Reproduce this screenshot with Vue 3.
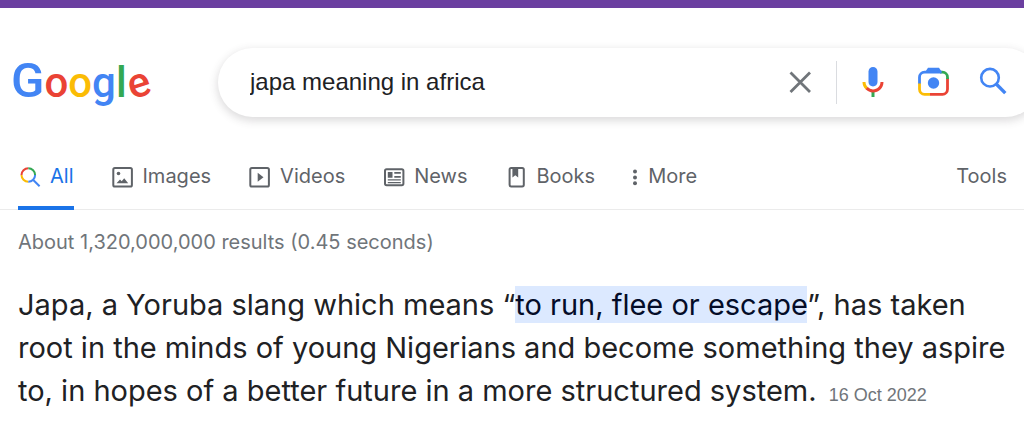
<script setup>
import { ref } from 'vue'

const query = ref('japa meaning in africa')
const logo = [
  { ch: 'G', tone: 'blue cap' },
  { ch: 'o', tone: 'red' },
  { ch: 'o', tone: 'yellow' },
  { ch: 'g', tone: 'blue' },
  { ch: 'l', tone: 'green' },
  { ch: 'e', tone: 'red tilt' },
]
const tabs = ['All', 'Images', 'Videos', 'News', 'Books', 'More']
</script>

<template>
  <div class="page">
    <div class="strip"></div>

    <header class="header">
      <a class="logo" href="#" aria-label="Google"><span v-for="(l, i) in logo" :key="i" :class="l.tone">{{ l.ch }}</span></a>
      <form class="search" role="search" @submit.prevent>
        <input v-model="query" class="query" type="text" aria-label="Search" />
        <button class="icon" type="button" aria-label="Clear" @click="query = ''">
          <svg viewBox="0 0 36 36"><path d="M8.500 8.500 28 28M28 8.500 8.500 28" stroke="#70757a" stroke-width="2.800" fill="none" /></svg>
        </button>
        <span class="divider"></span>
        <div class="tools">
          <button class="icon" type="button" aria-label="Search by voice">
            <svg viewBox="0 0 24 24">
              <path fill="#4285f4" d="M12 15c1.66 0 3-1.31 3-2.97V5.01C15 3.35 13.66 2 12 2S9 3.34 9 5.01v7.02C9 13.69 10.34 15 12 15z" />
              <path fill="#34a853" d="M11 18.08h2V22h-2z" />
              <path fill="#fbbc05" d="M7.05 16.87C5.78 15.54 5 14.04 5 12h2c0 1.45.56 2.42 1.47 3.38v.32l-1.15 1.18z" />
              <path fill="#ea4335" d="M12 16.93a4.97 5.25 0 0 1-3.54-1.55l-1.41 1.49C8.31 18.21 10.07 19 12 19c3.87 0 6.99-2.92 6.99-7H17c0 2.92-2.24 4.93-5 4.93z" />
            </svg>
          </button>
          <button class="icon" type="button" aria-label="Search by image">
            <svg viewBox="0 0 36 36" fill="none" stroke-width="2.800">
              <path stroke="#ea4335" d="M32.500 14v11.300a5 5 0 0 1-5 5H15" />
              <path stroke="#fbbc05" d="M15 30.300H9.500a5 5 0 0 1-5-5V19" />
              <path stroke="#34a853" d="M25 8.200h2.500a5 5 0 0 1 5 5V15" />
              <path stroke="#4285f4" d="M4.500 19.500v-6.300a5 5 0 0 1 5-5h17" />
              <path fill="#4285f4" d="M13 3.800h11l3 4.400H10z" />
              <circle cx="18.500" cy="19" r="5.700" fill="#4285f4" />
            </svg>
          </button>
          <button class="icon" type="submit" aria-label="Google Search">
            <svg viewBox="0 0 36 36" fill="none" stroke="#4285f4">
              <circle cx="15" cy="13.700" r="8.800" stroke-width="2.600" />
              <path d="M21 19.800 30.300 29.100" stroke-width="3.400" />
            </svg>
          </button>
        </div>
      </form>
    </header>

    <nav class="tabs">
      <a v-for="tab in tabs" :key="tab" class="tab" :class="{ active: tab === 'All' }" href="#">
        <svg v-if="tab === 'All'" class="glyph" viewBox="0 0 24 24" fill="none" stroke-width="2">
          <path stroke="#ea4335" d="M3.500 11a6.800 6.800 0 0 1 6.800-6.800" />
          <path stroke="#34a853" d="M10.300 4.200a6.800 6.800 0 0 1 6.800 6.800" />
          <path stroke="#fbbc05" d="M10.300 17.800A6.800 6.800 0 0 1 3.500 11" />
          <path stroke="#4285f4" d="M17.100 11a6.800 6.800 0 0 1-6.800 6.800M15 15.700l6.600 6.600" />
        </svg>
        <svg v-else-if="tab === 'Images'" class="glyph" viewBox="0 0 24 24">
          <rect x="2.300" y="4" width="18.600" height="18.600" rx="1.600" fill="none" stroke="currentColor" stroke-width="2" />
          <circle cx="7.500" cy="9.500" r="1.800" fill="currentColor" />
          <path fill="currentColor" d="M5.500 19.300 9 15.500l1.700 1.700 2.500-2.900 4 5z" />
        </svg>
        <svg v-else-if="tab === 'Videos'" class="glyph" viewBox="0 0 24 24">
          <rect x="2.300" y="4" width="18.600" height="18.600" rx="1.600" fill="none" stroke="currentColor" stroke-width="2" />
          <path fill="currentColor" d="M9.700 8.800v9l5.800-4.500z" />
        </svg>
        <svg v-else-if="tab === 'News'" class="glyph" viewBox="0 0 24 24">
          <rect x="3" y="5.200" width="18.400" height="16" rx="1.600" fill="none" stroke="currentColor" stroke-width="2" />
          <path fill="currentColor" d="M5.800 8h4.700v5.800H5.800zM12.300 8h6.500v1.800h-6.500zM12.300 12h6.500v1.800h-6.500zM5.800 15.200h13v1.400h-13zM5.800 18h13v1.300h-13z" />
        </svg>
        <svg v-else-if="tab === 'Books'" class="glyph" viewBox="0 0 24 24">
          <rect x="4.600" y="4" width="14.200" height="18.400" rx="1.600" fill="none" stroke="currentColor" stroke-width="2" />
          <path fill="currentColor" d="M7.400 4.500h5.800v9l-2.900-2.200-2.900 2.200z" />
        </svg>
        <svg v-else class="glyph dots" viewBox="0 0 8 24" fill="currentColor">
          <circle cx="3" cy="7.500" r="2" />
          <circle cx="3" cy="13.400" r="2" />
          <circle cx="3" cy="19.300" r="2" />
        </svg>
        <span>{{ tab }}</span>
      </a>
      <a class="tab last" href="#">Tools</a>
    </nav>

    <main class="results">
      <p class="stats">About 1,320,000,000 results (0.45 seconds)</p>
      <p class="snippet">
        Japa, a Yoruba slang which means “<mark>to run, flee or escape</mark>”, has taken<br />
        root in the minds of young Nigerians and become something they aspire<br />
        to, in hopes of a better future in a more structured system.
        <time datetime="2022-10-16">16 Oct 2022</time>
      </p>
    </main>
  </div>
</template>

<style>
body {
  background: #fff;
}
</style>

<style scoped>
.page {
  overflow: hidden;
  font-family: Inter, "Liberation Sans", sans-serif;
  color: #202124;
}
.strip {
  height: 8px;
  background: #6b3fa0;
}
.header {
  display: grid;
  grid-template-columns: 207px 1fr;
  align-items: center;
  padding: 39px 0 0 11px;
}
.logo {
  font: 500 42px/68px Roboto, sans-serif;
  text-decoration: none;
  white-space: nowrap;
}
.cap {
  font-size: 49px;
}
.blue { color: #4285f4; }
.red { color: #ea4335; }
.yellow { color: #fbbc05; }
.green { color: #34a853; }
.tilt {
  display: inline-block;
  transform: rotate(-18deg);
}
.search {
  display: flex;
  align-items: center;
  height: 69px;
  margin-right: -16px;
  padding: 0 29px 0 32px;
  box-sizing: border-box;
  border-radius: 35px;
  background: #fff;
  box-shadow: 0 3px 8px 1px rgba(64, 60, 67, 0.18);
}
.query {
  flex: 1;
  min-width: 0;
  padding: 0;
  border: 0;
  outline: 0;
  background: none;
  color: #202124;
  font: 24px/32px "Liberation Sans", Arial, sans-serif;
}
.icon {
  width: 36px;
  height: 36px;
  padding: 0;
  border: 0;
  background: none;
  cursor: pointer;
}
.icon svg {
  display: block;
  width: 36px;
  height: 36px;
}
.divider {
  width: 1px;
  height: 43px;
  margin: 0 18px;
  background: #dadce0;
}
.tools {
  display: flex;
  gap: 24px;
}
.tabs {
  display: flex;
  gap: 37px;
  height: 64px;
  margin-top: 28px;
  padding: 0 17px 0 18px;
  border-bottom: 1px solid #ebebeb;
}
.tab {
  display: flex;
  align-items: center;
  gap: 8px;
  height: 61px;
  border-bottom: 4px solid transparent;
  color: #5f6368;
  font-size: 20px;
  text-decoration: none;
}
.tab.active {
  color: #1a73e8;
  border-color: #1a73e8;
}
.tab.last {
  margin-left: auto;
}
.glyph {
  width: 24px;
  height: 24px;
}
.glyph.dots {
  width: 8px;
}
.results {
  padding: 0 18px;
}
.stats {
  margin: 17px 0 26px;
  color: #70757a;
  font-size: 20px;
  line-height: 30px;
}
.snippet {
  margin: 0;
  font-size: 29px;
  line-height: 43px;
  white-space: nowrap;
}
mark {
  padding: 1px 0;
  background: #dce9ff;
  color: #040c28;
}
time {
  margin-left: 4px;
  color: #70757a;
  font: 18px "Liberation Sans", Arial, sans-serif;
}
</style>
